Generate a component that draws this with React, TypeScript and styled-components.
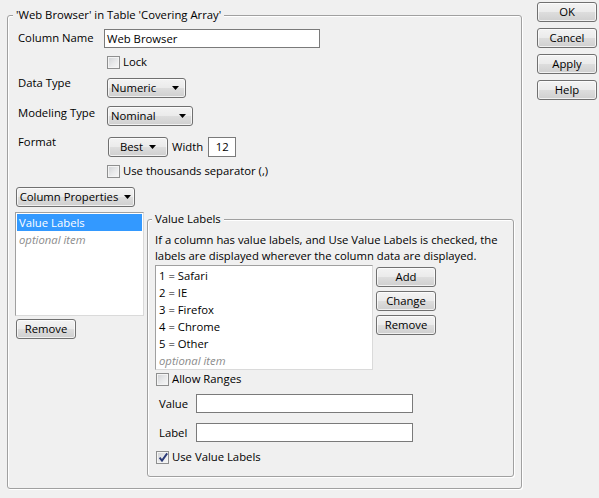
import React from 'react'
import styled, { createGlobalStyle } from 'styled-components'

const GlobalStyle = createGlobalStyle`
  * { box-sizing: border-box; }
  html, body { margin: 0; padding: 0; background: #f0f0f0; }
  body {
    font-family: 'Open Sans', 'Liberation Sans', sans-serif;
    font-size: 11.3px;
    color: #000;
  }
`

const Page = styled.div`
  display: flex;
  align-items: flex-start;
  width: 599px;
  height: 498px;
  overflow: hidden;
`

const GroupBox = styled.fieldset<{ $w: number; $h: number }>`
  margin: 0;
  padding: 0;
  min-width: 0;
  flex: none;
  width: ${p => p.$w}px;
  height: ${p => p.$h}px;
  border: 1px solid #a0a0a0;
  border-radius: 3px;
  box-shadow: 1px 1px 0 #fff, inset 1px 1px 0 #fff;
`

const GroupTitle = styled.legend<{ $indent: number }>`
  margin-left: ${p => p.$indent}px;
  padding: 0 3px;
  line-height: 16px;
  background: #f0f0f0;
`

const OuterBody = styled.div`
  padding-top: 6px;
`

const FormRow = styled.div<{ $mt: number }>`
  display: flex;
  align-items: flex-start;
  margin-top: ${p => p.$mt}px;
`

const FieldLabel = styled.div<{ $dy: number }>`
  flex: none;
  width: 96px;
  padding-left: 10px;
  line-height: 16px;
  margin-top: ${p => p.$dy}px;
`

const TextBox = styled.div<{ $w: number; $h?: number; $center?: boolean }>`
  flex: none;
  width: ${p => p.$w}px;
  height: ${p => p.$h ?? 19}px;
  line-height: ${p => (p.$h ?? 19) - 2}px;
  padding: 0 2px;
  background: #fff;
  border: 1px solid #7a7a7a;
  text-align: ${p => (p.$center ? 'center' : 'left')};
  white-space: nowrap;
`

const CheckRow = styled.div<{ $ml: number; $mt?: number }>`
  display: flex;
  align-items: center;
  gap: 3px;
  height: 16px;
  line-height: 16px;
  margin-left: ${p => p.$ml}px;
  margin-top: ${p => p.$mt ?? 0}px;
`

const CheckBox = styled.span`
  position: relative;
  flex: none;
  width: 13px;
  height: 13px;
  border: 1px solid #8e8f8f;
  background: linear-gradient(135deg, #cfd1d4 0%, #e9eaeb 55%, #f7f7f7 100%);
  box-shadow: inset 0 0 0 1px #f4f4f4;
  & svg {
    position: absolute;
    left: 1px;
    top: 0;
  }
`

const Button = styled.div<{ $w: number }>`
  flex: none;
  display: flex;
  align-items: center;
  justify-content: center;
  width: ${p => p.$w}px;
  height: 20px;
  line-height: 16px;
  border: 1px solid #707070;
  border-radius: 3px;
  background: linear-gradient(to bottom, #f3f3f3 0%, #ebebeb 48%, #dddddd 52%, #cfcfcf 100%);
  box-shadow: inset 0 0 0 1px rgba(255, 255, 255, 0.7);
  white-space: nowrap;
`

const DropButton = styled(Button)<{ $spread?: boolean }>`
  justify-content: ${p => (p.$spread ? 'space-between' : 'center')};
  gap: 6px;
  padding: ${p => (p.$spread ? '0 6px 0 3px' : '0 2px')};
`

const Arrow = () => (
  <svg width="7" height="4" viewBox="0 0 7 4">
    <polygon points="0,0 7,0 3.5,4" fill="#000" />
  </svg>
)

const Check = () => (
  <svg width="11" height="11" viewBox="0 0 11 11">
    <path d="M1.6 5.6 L4 8.6 L9.2 1.4" fill="none" stroke="#2b3a78" strokeWidth="1.9" />
  </svg>
)

const WidthLabel = styled.span`
  margin: 0 5px 0 4px;
  line-height: 20px;
`

const Lower = styled.div`
  display: flex;
  align-items: flex-start;
  margin-top: 4px;
`

const LeftColumn = styled.div`
  display: flex;
  flex-direction: column;
  align-items: flex-start;
  gap: 3px;
  margin: 1px 3px 0 7px;
  & > ${Button} {
    margin-left: 1px;
  }
`

const ListBox = styled.div<{ $w: number; $h: number }>`
  flex: none;
  width: ${p => p.$w}px;
  height: ${p => p.$h}px;
  padding: 1px;
  background: #fff;
  border: 1px solid;
  border-color: #a0a0a0 #dadada #dadada #a0a0a0;
`

const ListItem = styled.div<{ $selected?: boolean; $placeholder?: boolean }>`
  height: 17px;
  line-height: 17px;
  padding-left: 2px;
  white-space: nowrap;
  background: ${p => (p.$selected ? '#3399ff' : 'transparent')};
  color: ${p => (p.$selected ? '#fff' : p.$placeholder ? '#8c8c8c' : '#000')};
  font-style: ${p => (p.$placeholder ? 'italic' : 'normal')};
`

const InnerBody = styled.div`
  padding: 5px 0 0 7px;
`

const Description = styled.div`
  line-height: 16px;
  white-space: nowrap;
`

const ValueArea = styled.div`
  display: flex;
  align-items: flex-start;
  margin-top: 1px;
`

const SideButtons = styled.div`
  display: flex;
  flex-direction: column;
  gap: 4px;
  margin: 2px 0 0 3px;
`

const EntryRow = styled.div<{ $mt: number }>`
  display: flex;
  align-items: center;
  margin-top: ${p => p.$mt}px;
`

const EntryLabel = styled.div`
  flex: none;
  width: 41px;
  padding-left: 4px;
`

const DialogButtons = styled.div`
  display: flex;
  flex-direction: column;
  gap: 6px;
  margin: 2px 0 0 15px;
`

const values = ['1 = Safari', '2 = IE', '3 = Firefox', '4 = Chrome', '5 = Other']

export default function App() {
  return (
    <>
      <GlobalStyle />
      <Page>
        <GroupBox $w={515} $h={482} style={{ marginLeft: 7, marginTop: 7 }}>
          <GroupTitle $indent={5}>'Web Browser' in Table 'Covering Array'</GroupTitle>
          <OuterBody>
            <FormRow $mt={0}>
              <FieldLabel $dy={1}>Column Name</FieldLabel>
              <TextBox $w={216}>Web Browser</TextBox>
            </FormRow>
            <FormRow $mt={6}>
              <FieldLabel $dy={0} />
              <CheckRow $ml={3}>
                <CheckBox />
                Lock
              </CheckRow>
            </FormRow>
            <FormRow $mt={8}>
              <FieldLabel $dy={-3}>Data Type</FieldLabel>
              <DropButton $w={79} $spread style={{ marginLeft: 3 }}>
                Numeric
                <Arrow />
              </DropButton>
            </FormRow>
            <FormRow $mt={8}>
              <FieldLabel $dy={-1}>Modeling Type</FieldLabel>
              <DropButton $w={86} $spread style={{ marginLeft: 3 }}>
                Nominal
                <Arrow />
              </DropButton>
            </FormRow>
            <FormRow $mt={11}>
              <FieldLabel $dy={-3}>Format</FieldLabel>
              <DropButton $w={60} style={{ marginLeft: 4 }}>
                Best
                <Arrow />
              </DropButton>
              <WidthLabel>Width</WidthLabel>
              <TextBox $w={28} $h={20} $center>
                12
              </TextBox>
            </FormRow>
            <FormRow $mt={6}>
              <FieldLabel $dy={0} />
              <CheckRow $ml={3}>
                <CheckBox />
                Use thousands separator (,)
              </CheckRow>
            </FormRow>
            <FormRow $mt={8}>
              <DropButton $w={119} style={{ marginLeft: 8 }}>
                Column Properties
                <Arrow />
              </DropButton>
            </FormRow>
            <Lower>
              <LeftColumn>
                <ListBox $w={129} $h={104}>
                  <ListItem $selected>Value Labels</ListItem>
                  <ListItem $placeholder>optional item</ListItem>
                </ListBox>
                <Button $w={60}>Remove</Button>
              </LeftColumn>
              <GroupBox $w={367} $h={266}>
                <GroupTitle $indent={4}>Value Labels</GroupTitle>
                <InnerBody>
                  <Description>
                    If a column has value labels, and Use Value Labels is checked, the
                    <br />
                    labels are displayed wherever the column data are displayed.
                  </Description>
                  <ValueArea>
                    <ListBox $w={218} $h={105}>
                      {values.map(v => (
                        <ListItem key={v}>{v}</ListItem>
                      ))}
                      <ListItem $placeholder>optional item</ListItem>
                    </ListBox>
                    <SideButtons>
                      <Button $w={60}>Add</Button>
                      <Button $w={60}>Change</Button>
                      <Button $w={60}>Remove</Button>
                    </SideButtons>
                  </ValueArea>
                  <CheckRow $ml={1} $mt={1}>
                    <CheckBox />
                    Allow Ranges
                  </CheckRow>
                  <EntryRow $mt={7}>
                    <EntryLabel>Value</EntryLabel>
                    <TextBox $w={217} />
                  </EntryRow>
                  <EntryRow $mt={10}>
                    <EntryLabel>Label</EntryLabel>
                    <TextBox $w={217} />
                  </EntryRow>
                  <CheckRow $ml={1} $mt={7}>
                    <CheckBox>
                      <Check />
                    </CheckBox>
                    Use Value Labels
                  </CheckRow>
                </InnerBody>
              </GroupBox>
            </Lower>
          </OuterBody>
        </GroupBox>
        <DialogButtons>
          <Button $w={60}>OK</Button>
          <Button $w={60}>Cancel</Button>
          <Button $w={60}>Apply</Button>
          <Button $w={60}>Help</Button>
        </DialogButtons>
      </Page>
    </>
  )
}
